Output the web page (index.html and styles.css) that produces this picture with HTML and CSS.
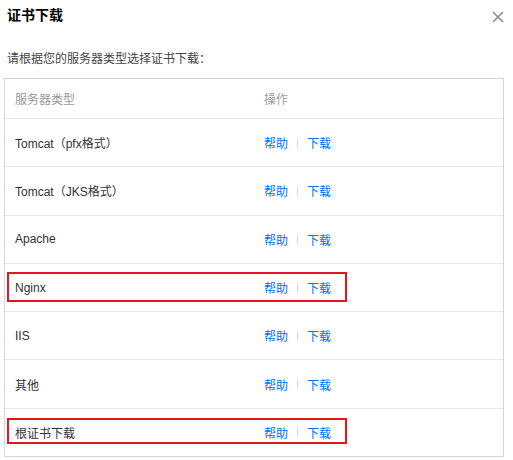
FILE: index.html
```html
<!DOCTYPE html>
<html lang="zh-CN">
<head>
    <meta charset="UTF-8">
    <title>证书下载</title>
    <link rel="stylesheet" href="styles.css">
</head>
<body>
    <div class="dialog">
        <div class="dialog-head">
            <h3 class="dialog-title">证书下载</h3>
            <svg class="dialog-close" width="12" height="12" viewBox="0 0 12 12">
                <path d="M1 1 L11 11 M11 1 L1 11" stroke="#8a8a8a" stroke-width="1.5" fill="none"/>
            </svg>
        </div>

        <p class="dialog-tip">请根据您的服务器类型选择证书下载：</p>

        <div class="cert-table">
            <div class="row row-head">
                <div class="cell">服务器类型</div>
                <div class="cell">操作</div>
            </div>
            <div class="row">
                <div class="cell">Tomcat（pfx格式）</div>
                <div class="cell"><a class="link">帮助</a><span class="sep"></span><a class="link">下载</a></div>
            </div>
            <div class="row">
                <div class="cell">Tomcat（JKS格式）</div>
                <div class="cell"><a class="link">帮助</a><span class="sep"></span><a class="link">下载</a></div>
            </div>
            <div class="row">
                <div class="cell">Apache</div>
                <div class="cell"><a class="link">帮助</a><span class="sep"></span><a class="link">下载</a></div>
            </div>
            <div class="row">
                <div class="cell">Nginx</div>
                <div class="cell"><a class="link">帮助</a><span class="sep"></span><a class="link">下载</a></div>
                <div class="mark mark-nginx"></div>
            </div>
            <div class="row">
                <div class="cell">IIS</div>
                <div class="cell"><a class="link">帮助</a><span class="sep"></span><a class="link">下载</a></div>
            </div>
            <div class="row">
                <div class="cell">其他</div>
                <div class="cell"><a class="link">帮助</a><span class="sep"></span><a class="link">下载</a></div>
            </div>
            <div class="row">
                <div class="cell">根证书下载</div>
                <div class="cell"><a class="link">帮助</a><span class="sep"></span><a class="link">下载</a></div>
                <div class="mark mark-root"></div>
            </div>
        </div>
    </div>
</body>
</html>
```

FILE: styles.css
```css
/* Page */
body {
    margin: 0;
    background: #fff;
    font-family: "Liberation Sans", "Noto Sans CJK SC", sans-serif;
    font-size: 12px;
    color: #333;
}
.dialog {
    width: 500px;
    padding: 5px 9px 0 4px;
}

/* Title bar */
.dialog-head {
    display: flex;
    justify-content: space-between;
    align-items: center;
    height: 20px;
}
.dialog-title {
    margin: 0;
    padding-left: 3px;
    font-size: 14px;
    font-weight: bold;
    line-height: 20px;
    color: #000;
}
.dialog-close {
    margin-top: 4px;
}
.dialog-tip {
    margin: 25px 0 0;
    padding-left: 3px;
    line-height: 18px;
    color: #444;
}

/* Table */
.cert-table {
    margin-top: 10px;
    border: 1px solid #d1d5dc;
}
.row {
    position: relative;
    display: grid;
    grid-template-columns: 249px 1fr;
    align-items: center;
    height: 47.3px;
    border-top: 1px solid #e5e8ec;
}
.row-head {
    height: 39px;
    border-top: none;
    color: #999;
}
.cell {
    display: flex;
    align-items: center;
    padding: 0 10px;
}
.link {
    color: #006eff;
    cursor: pointer;
}
.sep {
    width: 1px;
    height: 10px;
    margin: 0 9px;
    background: #ddd;
}

/* red annotation boxes drawn over rows */
.mark {
    position: absolute;
    left: 2px;
    width: 336px;
    border: 2px solid #e8141e;
}
.mark-nginx {
    top: 8px;
    height: 26px;
}
.mark-root {
    top: 9px;
    height: 22px;
}
```
